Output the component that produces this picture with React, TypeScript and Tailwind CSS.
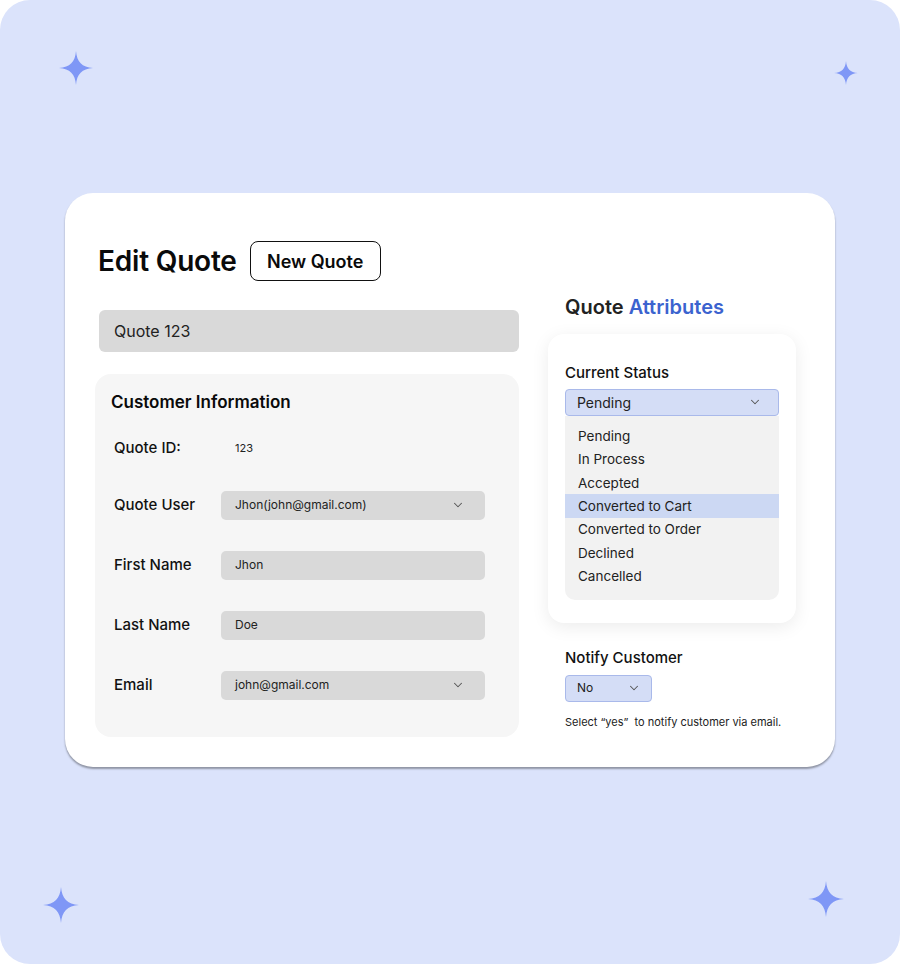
import { ChevronDown } from "lucide-react";

const statuses = [
  "Pending",
  "In Process",
  "Accepted",
  "Converted to Cart",
  "Converted to Order",
  "Declined",
  "Cancelled",
];

function Sparkle({ className }: { className: string }) {
  return (
    <svg viewBox="0 0 40 40" className={className} fill="#7f97f6">
      <path d="M20 0 C21 13 27 19 40 20 C27 21 21 27 20 40 C19 27 13 21 0 20 C13 19 19 13 20 0 Z" />
    </svg>
  );
}

function Field({ label, value, chevron }: { label: string; value: string; chevron?: boolean }) {
  return (
    <div className="flex items-center">
      <span className="w-[107px] text-[15px] font-medium text-[#111]">{label}</span>
      <div className="flex h-[29px] w-[264px] items-center justify-between rounded-[5px] bg-[#d9d9d9] pl-[14px] pr-[20px] text-[12px] text-[#222]">
        <span>{value}</span>
        {chevron ? <ChevronDown size={14} strokeWidth={1.8} className="text-[#555]" /> : null}
      </div>
    </div>
  );
}

export default function App() {
  return (
    <div
      className="flex h-[964px] w-[900px] flex-col overflow-hidden rounded-[30px] bg-[#dbe3fb]"
      style={{ fontFamily: "Inter, 'Noto Sans', sans-serif" }}
    >
      <div className="flex h-[193px] items-start justify-between">
        <Sparkle className="ml-[59px] mt-[51px] h-[34px] w-[34px]" />
        <Sparkle className="mr-[42px] mt-[61px] h-[24px] w-[24px]" />
      </div>

      <div className="mx-[65px] flex h-[574px] rounded-[28px] bg-white px-[30px] pt-[47px] shadow-[0_2px_2px_rgba(0,0,0,0.35)]">
        {/* left column */}
        <div className="flex w-[424px] flex-col">
          <div className="flex items-center gap-[13px] pl-[3px]">
            <h1 className="text-[28px] font-semibold tracking-[-0.2px] text-[#0a0a0a]">Edit Quote</h1>
            <button className="flex h-[40px] w-[131px] items-center justify-center rounded-[8px] border-[1.5px] border-[#111] text-[18px] font-semibold text-[#0a0a0a]">
              New Quote
            </button>
          </div>

          <div className="ml-[4px] mt-[28px] flex h-[42px] w-[420px] items-center rounded-[6px] bg-[#d9d9d9] px-[15px] text-[16px] text-[#222]">
            Quote 123
          </div>

          <div className="mt-[22px] flex h-[363px] w-[424px] flex-col rounded-[16px] bg-[#f6f6f6] pl-[16px] pt-[16px]">
            <h2 className="text-[17px] font-semibold text-[#0a0a0a]">Customer Information</h2>
            <div className="ml-[3px] mt-[21px] flex flex-col gap-[31px]">
              <div className="flex h-[23px] items-center">
                <span className="w-[121px] text-[15px] font-medium text-[#111]">Quote ID:</span>
                <span className="text-[11px] text-[#222]">123</span>
              </div>
              <Field label="Quote User" value="Jhon(john@gmail.com)" chevron />
              <Field label="First Name" value="Jhon" />
              <Field label="Last Name" value="Doe" />
              <Field label="Email" value="john@gmail.com" chevron />
            </div>
          </div>
        </div>

        {/* right column */}
        <div className="ml-[29px] flex flex-col pt-[52px]">
          <h2 className="pl-[17px] text-[20px] font-semibold text-[#222]">
            Quote <span className="text-[#3b63cf]">Attributes</span>
          </h2>

          <div className="mt-[12px] flex h-[289px] w-[248px] flex-col rounded-[16px] bg-white px-[17px] pt-[28px] shadow-[0_4px_18px_rgba(0,0,0,0.08)]">
            <span className="text-[15px] font-medium text-[#111]">Current Status</span>
            <div className="mt-[4px] flex h-[27px] items-center justify-between rounded-[4px] border border-[#a9b9ea] bg-[#d4ddf6] pl-[11px] pr-[16px] text-[14px] text-[#222]">
              <span>Pending</span>
              <ChevronDown size={14} strokeWidth={1.8} className="text-[#555]" />
            </div>
            <ul className="flex h-[184px] flex-col rounded-b-[10px] bg-[#f2f2f2] pt-[9px]">
              {statuses.map((s) => (
                <li
                  key={s}
                  className={
                    "flex h-[23.3px] items-center pl-[13px] text-[13.5px] text-[#222] " +
                    (s === "Converted to Cart" ? "bg-[#ccd8f3]" : "")
                  }
                >
                  {s}
                </li>
              ))}
            </ul>
          </div>

          <div className="mt-[24px] flex flex-col pl-[17px]">
            <span className="text-[15px] font-medium text-[#111]">Notify Customer</span>
            <div className="mt-[5px] flex h-[27px] w-[87px] items-center justify-between rounded-[4px] border border-[#a9b9ea] bg-[#d4ddf6] pl-[11px] pr-[10px] text-[12px] text-[#222]">
              <span>No</span>
              <ChevronDown size={14} strokeWidth={1.8} className="text-[#555]" />
            </div>
            <p className="mt-[12px] text-[11px] text-[#222]">Select “yes”&nbsp; to notify customer via email.</p>
          </div>
        </div>
      </div>

      <div className="flex flex-1 items-start justify-between">
        <Sparkle className="ml-[43px] mt-[120px] h-[36px] w-[36px]" />
        <Sparkle className="mr-[56px] mt-[114px] h-[36px] w-[36px]" />
      </div>
    </div>
  );
}
